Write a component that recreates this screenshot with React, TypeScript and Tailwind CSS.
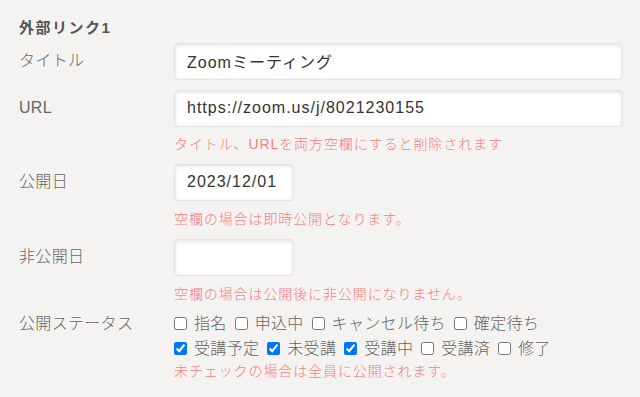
import * as React from "react";

const font = {
  fontFamily: '"Liberation Sans", "Noto Sans CJK JP", sans-serif',
};

const row1 = [
  { label: "指名", checked: false },
  { label: "申込中", checked: false },
  { label: "キャンセル待ち", checked: false },
  { label: "確定待ち", checked: false },
];

const row2 = [
  { label: "受講予定", checked: true },
  { label: "未受講", checked: true },
  { label: "受講中", checked: true },
  { label: "受講済", checked: false },
  { label: "修了", checked: false },
];

const inputClass =
  "h-[37px] rounded-[4px] border border-[#e4e4e4] bg-white px-3 text-[16px] tracking-[1px] text-[#333] shadow-[inset_0_1px_4px_rgba(0,0,0,0.13)] outline-none";

function Label({ children }: { children: React.ReactNode }) {
  return (
    <div className="flex h-[37px] items-center text-[16px] font-light tracking-[0.02em] text-[#666]">
      {children}
    </div>
  );
}

function Help({ children }: { children: React.ReactNode }) {
  return (
    <p className="h-5 text-[14px] font-light leading-5 tracking-[0.9px] text-[#f57f7f]">
      {children}
    </p>
  );
}

function CheckRow({ items }: { items: { label: string; checked: boolean }[] }) {
  return (
    <div className="flex h-[25px] items-center gap-x-[8px]">
      {items.map((item) => (
        <label
          key={item.label}
          className="flex items-center gap-[7px] text-[16px] font-light tracking-[0.02em] text-[#666]"
        >
          <input
            type="checkbox"
            defaultChecked={item.checked}
            className="m-0 h-[13px] w-[13px]"
          />
          <span>{item.label}</span>
        </label>
      ))}
    </div>
  );
}

export default function App() {
  return (
    <div
      className="h-[397px] w-[640px] overflow-hidden bg-[#f4f3f1] pl-[19px] pr-[17px] pt-[18px]"
      style={font}
    >
      <h2 className="h-5 text-[15px] font-bold leading-5 tracking-[0.1em] text-[#555]">
        外部リンク1
      </h2>

      <div className="mt-[4.5px] grid grid-cols-[155px_1fr]">
        {/* タイトル */}
        <Label>タイトル</Label>
        <input className={inputClass} defaultValue="Zoomミーティング" />

        {/* URL */}
        <div className="mt-[10px]">
          <Label>URL</Label>
        </div>
        <div className="mt-[10px] flex flex-col">
          <input
            className={inputClass}
            defaultValue="https://zoom.us/j/8021230155"
          />
          <div className="mt-[7px]">
            <Help>タイトル、URLを両方空欄にすると削除されます</Help>
          </div>
        </div>

        {/* 公開日 */}
        <div className="mt-[10px]">
          <Label>公開日</Label>
        </div>
        <div className="mt-[10px] flex flex-col">
          <input className={`${inputClass} w-[120px]`} defaultValue="2023/12/01" />
          <div className="mt-[8px]">
            <Help>空欄の場合は即時公開となります。</Help>
          </div>
        </div>

        {/* 非公開日 */}
        <div className="mt-[10px]">
          <Label>非公開日</Label>
        </div>
        <div className="mt-[10px] flex flex-col">
          <input className={`${inputClass} w-[120px]`} defaultValue="" />
          <div className="mt-[8px]">
            <Help>空欄の場合は公開後に非公開になりません。</Help>
          </div>
        </div>

        {/* 公開ステータス */}
        <div className="mt-[7.5px] flex h-[25px] items-center text-[16px] font-light tracking-[0.02em] text-[#666]">
          公開ステータス
        </div>
        <div className="mt-[7.5px] flex flex-col">
          <CheckRow items={row1} />
          <CheckRow items={row2} />
          <Help>未チェックの場合は全員に公開されます。</Help>
        </div>
      </div>
    </div>
  );
}
